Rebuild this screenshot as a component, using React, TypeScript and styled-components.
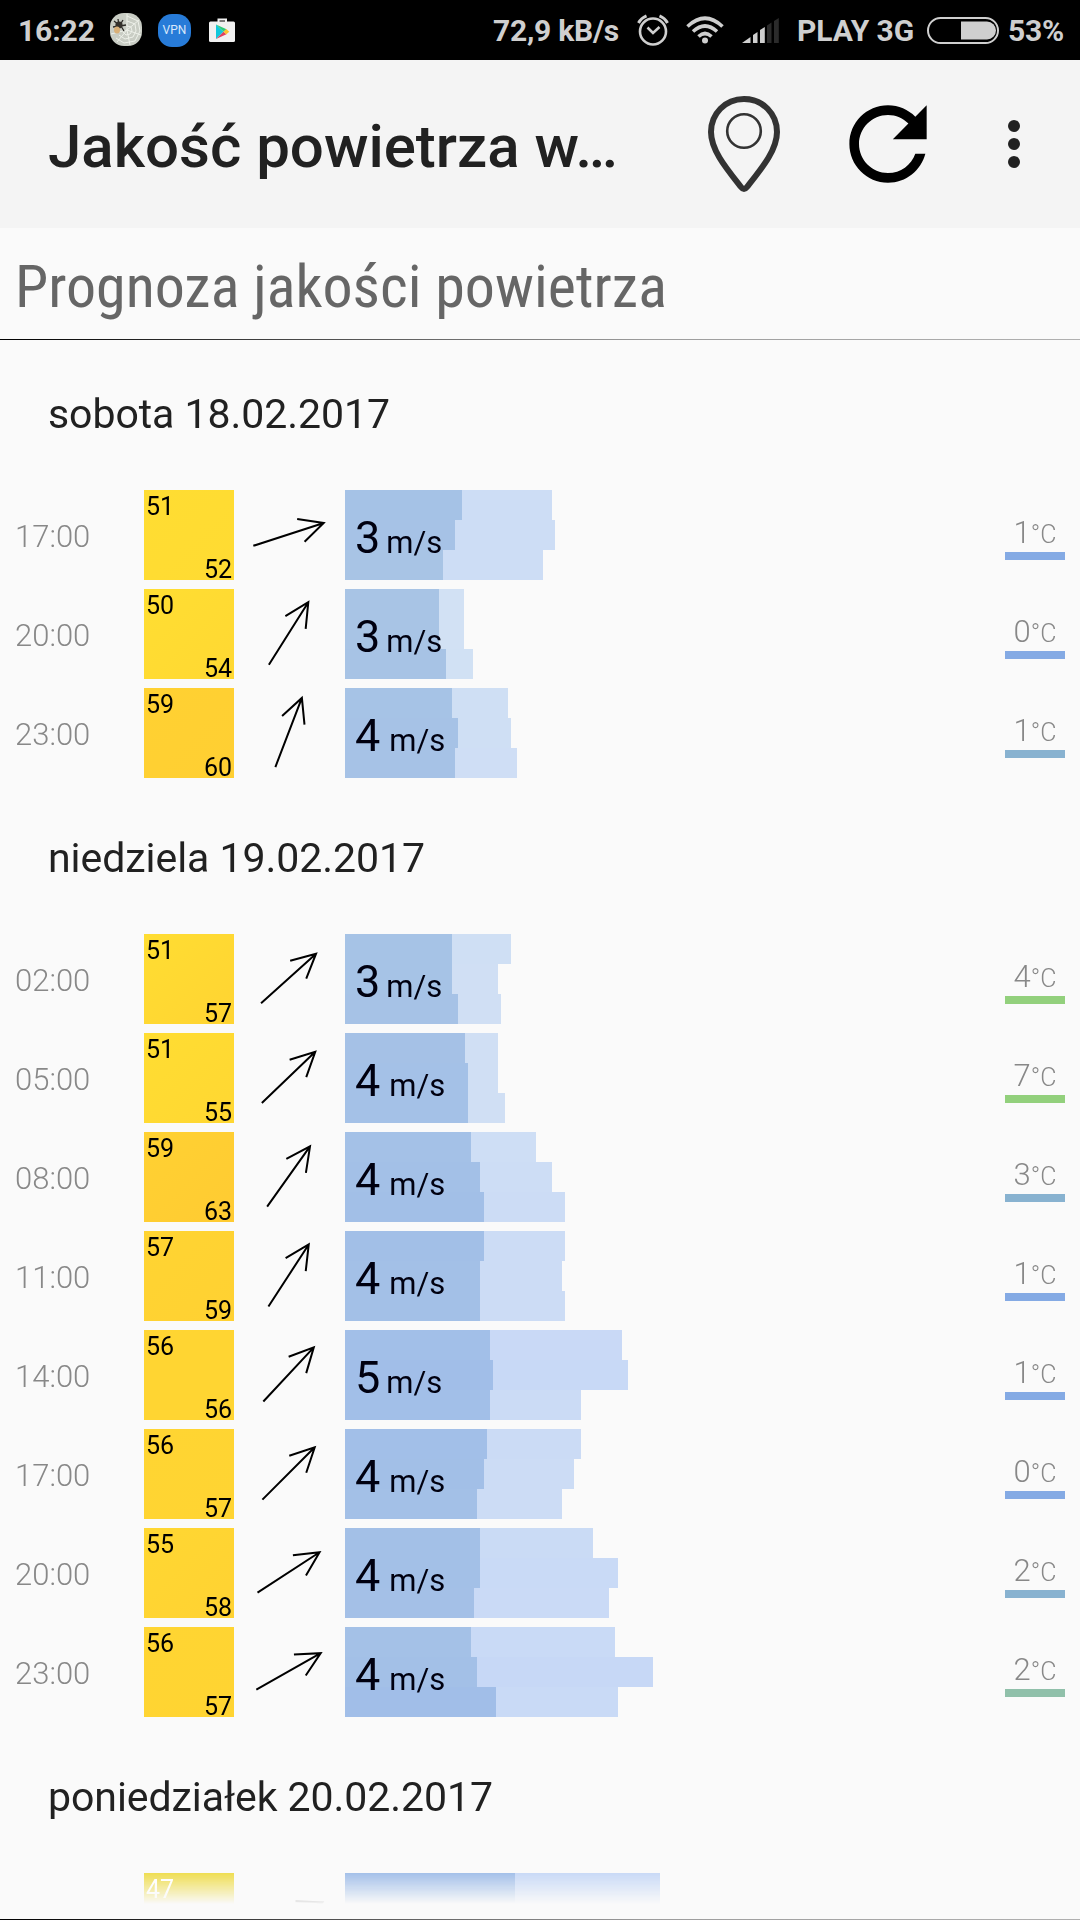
import React from "react";
import styled, { createGlobalStyle } from "styled-components";

const GlobalStyle = createGlobalStyle`
  * { box-sizing: border-box; }
  html, body { margin: 0; padding: 0; background: #fafafa; }
  body { font-family: Roboto, "Liberation Sans", sans-serif; }
`;

const Screen = styled.main`
  width: 1080px;
  height: 1920px;
  display: flex;
  flex-direction: column;
  overflow: hidden;
  background: #fafafa;
`;

const StatusBar = styled.header`
  flex: none;
  height: 60px;
  display: flex;
  align-items: center;
  justify-content: space-between;
  padding: 0 18px 0 18px;
  background: #000;
  color: #cfcfcf;
`;

const StatusGroup = styled.div`
  display: flex;
  align-items: center;
  svg { display: block; flex: none; }
`;

const StatusText = styled.span<{ $width: number; $gap: number; $tight?: boolean }>`
  flex: none;
  width: ${(p) => p.$width}px;
  margin-right: ${(p) => p.$gap}px;
  padding-top: 1px;
  font-size: 30px;
  font-weight: 700;
  letter-spacing: ${(p) => (p.$tight ? -0.25 : -0.1)}px;
  line-height: 59px;
  white-space: nowrap;
`;

const Slot = styled.span<{ $gap: number }>`
  flex: none;
  margin-right: ${(p) => p.$gap}px;
`;

const AppBar = styled.nav`
  flex: none;
  height: 168px;
  display: flex;
  align-items: center;
  padding: 0 60px 0 48px;
  background: #f4f4f4;
  svg { display: block; flex: none; }
`;

const AppTitle = styled.h1`
  flex: 1;
  margin: 5px 0 0;
  font-size: 60px;
  font-weight: 500;
  line-height: 80px;
  color: #212121;
  white-space: nowrap;
`;

const PageTitle = styled.h2`
  flex: none;
  height: 111px;
  margin: 0;
  padding: 4px 0 0 15px;
  font-family: "Roboto Condensed", Roboto, sans-serif;
  font-stretch: 75%;
  font-size: 60px;
  font-weight: 400;
  line-height: 110px;
  color: #666;
  white-space: nowrap;
`;

const Divider = styled.div`
  flex: none;
  height: 1px;
  background: linear-gradient(to right, #000, #9c9c9c 60%, #b0b0b0);
`;

const Forecast = styled.section`
  flex: none;
  height: 1579px;
  overflow: hidden;
  mask-image: linear-gradient(to bottom, #000 1532px, transparent 1564px);
`;

const DayTitle = styled.h3<{ $first?: boolean }>`
  margin: 0;
  height: ${(p) => (p.$first ? 150 : 156)}px;
  padding: ${(p) => (p.$first ? 50 : 56)}px 0 0 48px;
  font-size: 41px;
  font-weight: 400;
  line-height: 49px;
  letter-spacing: -0.05px;
  color: #212121;
  white-space: nowrap;
`;

const Rows = styled.div`
  display: flex;
  flex-direction: column;
  gap: 9px;
`;

const Row = styled.div`
  display: grid;
  grid-template-columns: 129px 90px 111px 1fr 60px;
  grid-template-rows: 90px;
  height: 90px;
  padding: 0 15px;
`;

const Time = styled.time`
  padding-top: 4px;
  font-size: 31px;
  font-weight: 300;
  line-height: 86px;
  color: #888;
`;

const Quality = styled.div<{ $from: string; $to: string }>`
  display: flex;
  flex-direction: column;
  justify-content: space-between;
  padding: 3px 2px 0 2px;
  background: linear-gradient(135deg, ${(p) => p.$from}, ${(p) => p.$to});
`;

const Index = styled.span<{ $end?: boolean; $light?: boolean }>`
  align-self: ${(p) => (p.$end ? "flex-end" : "flex-start")};
  font-size: 25px;
  line-height: ${(p) => (p.$end ? 21 : 27)}px;
  color: ${(p) => (p.$light ? "#fff" : "#000")};
`;

const WindChart = styled.div`
  display: grid;
  grid-template-rows: repeat(3, 30px);
  > * { grid-column: 1; }
`;

const Gust = styled.div<{ $row: number }>`
  grid-row: ${(p) => p.$row};
  display: flex;
`;

const Speed = styled.div`
  grid-row: 1 / 4;
  z-index: 1;
  display: flex;
  align-items: baseline;
  padding: 21px 0 0 10px;
  font-size: 45px;
  line-height: 53px;
  color: #000010;
`;

const Unit = styled.span<{ $wide?: boolean }>`
  margin-left: ${(p) => (p.$wide ? 9 : 6)}px;
  font-size: 31px;
`;

const Temperature = styled.div<{ $color: string }>`
  height: 70px;
  border-bottom: 8px solid ${(p) => p.$color};
  padding-top: 24px;
  font-size: 31px;
  font-weight: 300;
  line-height: 38px;
  color: #888;
  text-align: center;
  small { font-size: 25px; }
`;

type Reading = {
  time: string;
  from: number;
  to: number;
  angle: number;
  speed: number;
  wind: number[];
  gust: number[];
  temp: number;
  tint: string;
};

const BLUE = "#84aae4";
const TEAL = "#88b2d0";
const GREEN = "#92d07c";
const SEA = "#90c0aa";

const days: { title: string; rows: Reading[] }[] = [
  {
    title: "sobota 18.02.2017",
    rows: [
      { time: "17:00", from: 51, to: 52, angle: 18, speed: 3, wind: [117, 110, 98], gust: [207, 210, 198], temp: 1, tint: BLUE },
      { time: "20:00", from: 50, to: 54, angle: 57.8, speed: 3, wind: [94, 94, 101], gust: [119, 119, 128], temp: 0, tint: BLUE },
      { time: "23:00", from: 59, to: 60, angle: 69, speed: 4, wind: [107, 113, 110], gust: [163, 166, 172], temp: 1, tint: TEAL },
    ],
  },
  {
    title: "niedziela 19.02.2017",
    rows: [
      { time: "02:00", from: 51, to: 57, angle: 42, speed: 3, wind: [107, 107, 113], gust: [166, 153, 156], temp: 4, tint: GREEN },
      { time: "05:00", from: 51, to: 55, angle: 43.8, speed: 4, wind: [120, 123, 123], gust: [153, 153, 160], temp: 7, tint: GREEN },
      { time: "08:00", from: 59, to: 63, angle: 54.6, speed: 4, wind: [126, 135, 139], gust: [191, 207, 220], temp: 3, tint: TEAL },
      { time: "11:00", from: 57, to: 59, angle: 57, speed: 4, wind: [139, 135, 135], gust: [220, 217, 220], temp: 1, tint: BLUE },
      { time: "14:00", from: 56, to: 56, angle: 47, speed: 5, wind: [145, 148, 145], gust: [277, 283, 236], temp: 1, tint: BLUE },
      { time: "17:00", from: 56, to: 57, angle: 45, speed: 4, wind: [142, 139, 132], gust: [236, 229, 217], temp: 0, tint: BLUE },
      { time: "20:00", from: 55, to: 58, angle: 33, speed: 4, wind: [135, 135, 129], gust: [248, 273, 264], temp: 2, tint: TEAL },
      { time: "23:00", from: 56, to: 57, angle: 29.5, speed: 4, wind: [126, 132, 151], gust: [270, 308, 273], temp: 2, tint: SEA },
    ],
  },
  {
    title: "poniedziałek 20.02.2017",
    rows: [
      { time: "02:00", from: 47, to: 49, angle: 24, speed: 5, wind: [170, 170, 170], gust: [315, 315, 315], temp: 2, tint: BLUE },
    ],
  },
];

const clamp = (t: number) => Math.max(0, Math.min(1, t));

const mix = (a: number[], b: number[], t: number) =>
  `rgb(${a.map((v, i) => Math.round(v + (b[i] - v) * clamp(t))).join(",")})`;

const qualityColor = (v: number) =>
  v < 50 ? "#eedc4c" : mix([255, 222, 50], [255, 203, 50], (v - 50) / 13);
const windColor = (w: number) => mix([168, 196, 229], [161, 190, 232], (w - 94) / 56);
const gustColor = (g: number) => mix([210, 225, 244], [199, 216, 246], (g - 119) / 189);

function Arrow({ angle }: { angle: number }) {
  return (
    <svg width="111" height="90" viewBox="0 0 111 90" fill="none" stroke="#000" strokeWidth="2">
      <path transform={`rotate(${-angle} 54.7 44.3)`} d="M17.500 44.300H91.500M67.500 32.300L91.500 44.300L67.500 56.300" />
    </svg>
  );
}

function ForecastRow({ r }: { r: Reading }) {
  const hidden = r.from < 50;
  return (
    <Row>
      <Time>{hidden ? "" : r.time}</Time>
      <Quality $from={qualityColor(r.from)} $to={qualityColor(hidden ? r.from : r.to)}>
        <Index $light={hidden}>{r.from}</Index>
        {!hidden && <Index $end>{r.to}</Index>}
      </Quality>
      <Arrow angle={r.angle} />
      <WindChart>
        {r.wind.map((w, i) => (
          <Gust key={i} $row={i + 1}>
            <div style={{ width: w, background: windColor(w) }} />
            <div style={{ width: r.gust[i] - w, background: gustColor(r.gust[i]) }} />
          </Gust>
        ))}
        {!hidden && (
          <Speed>
            {r.speed}
            <Unit $wide={r.speed === 4}>m/s</Unit>
          </Speed>
        )}
      </WindChart>
      {!hidden && (
        <Temperature $color={r.tint}>
          {r.temp}
          <small>°C</small>
        </Temperature>
      )}
    </Row>
  );
}

const SpiderIcon = () => (
  <svg width="34" height="34" viewBox="0 0 34 34">
    <rect x="1" y="0" width="32" height="33" rx="14" fill="#c9cdc4" />
    <g fill="none" stroke="#eef1ea" strokeWidth="1">
      <path d="M18 3L29 8L31 18L26 28L15 30L7 25" />
      <path d="M18 8L26 11L27 18L24 24L16 26L10 22" />
      <path d="M18 13L22 14L23 18L21 21L17 22L14 19" />
      <path d="M18 17L18 1M18 17L30 7M18 17L32 22M18 17L21 32M18 17L8 29M18 17L2 21" />
    </g>
    <path d="M5 8l5 4M9 6l1 6M14 7l-3 5M17 12l-6 1M4 14l6-1M12 13l3 5" stroke="#2c2a26" strokeWidth="1.3" />
    <ellipse cx="10" cy="12" rx="3.6" ry="3.4" fill="#33302b" />
    <ellipse cx="8" cy="17" rx="3" ry="3.6" fill="#d9b078" />
  </svg>
);

const VpnBadge = styled.span`
  display: flex;
  align-items: center;
  justify-content: center;
  width: 33px;
  height: 33px;
  border-radius: 14px;
  background: #277bd8;
  color: #d8e8fa;
  font-size: 12px;
  line-height: 33px;
`;

const PlayIcon = () => (
  <svg width="26" height="25" viewBox="0 0 26 25">
    <path d="M9.5 5V1.5h7.500V5" fill="none" stroke="#f1f1f1" strokeWidth="2" />
    <rect y="3.500" width="26" height="20.500" rx="1.500" fill="#f1f1f1" />
    <path d="M7 6.500V21l7.500-7.200z" fill="#10c8dc" />
    <path d="M7 6.500l10.500 4.700-3 2.600z" fill="#2fca7c" />
    <path d="M7 21l10.500-4.700-3-2.600z" fill="#e0405f" />
    <path d="M17.300 11.100l3 2.700-3 2.500-2.800-2.500z" fill="#fcc12c" />
  </svg>
);

const AlarmIcon = () => (
  <svg width="32" height="32" viewBox="0 0 32 32" fill="none" stroke="#cfcfcf">
    <circle cx="16" cy="17.500" r="13" strokeWidth="2.600" />
    <path d="M1.500 9Q4 4 9.500 1.800M30.500 9Q28 4 22.500 1.800" strokeWidth="3" />
    <path d="M10.500 13.500L16 19L22.500 13" strokeWidth="2.600" />
  </svg>
);

const WifiIcon = () => (
  <svg width="38" height="28" viewBox="0 0 38 28" fill="none" stroke="#cfcfcf" strokeWidth="3.600">
    <path d="M1.500 10.500Q19-6 36.500 10.500M7 15.500Q19 4.500 31 15.500M12.500 20.500Q19 14.500 25.500 20.500" />
    <circle cx="19" cy="24.500" r="3" fill="#cfcfcf" stroke="none" />
  </svg>
);

const SignalIcon = () => (
  <svg width="37" height="25" viewBox="0 0 37 25">
    <g fill="#cfcfcf">
      <path d="M0 25L8.500 19V25z" />
      <path d="M11 25V17l4.500-3V25z" />
      <path d="M18 25V12l4.800-3V25z" />
    </g>
    <path d="M25 25V7.500l4.500-3V25zM32 25V3l4.800-3V25z" fill="#2b2b2b" />
  </svg>
);

const BatteryIcon = () => (
  <svg width="72" height="27" viewBox="0 0 72 27">
    <rect x="1" y="1" width="70" height="25" rx="12.500" fill="none" stroke="#cfcfcf" strokeWidth="2" />
    <path d="M34 4.500H60a9 9 0 0 1 0 18H34z" fill="#cfcfcf" />
  </svg>
);

const PinIcon = () => (
  <svg width="72" height="96" viewBox="0 0 72 96" fill="none" stroke="#333">
    <path
      d="M36 3C17 3 3 18 3 36C3 54 18 72 33 91Q36 95 39 91C54 72 69 54 69 36C69 18 55 3 36 3Z"
      strokeWidth="6"
    />
    <circle cx="36" cy="35" r="16.800" strokeWidth="2.600" />
  </svg>
);

const RefreshIcon = () => (
  <svg width="116" height="116" viewBox="0 0 24 24">
    <path d="M17.650 6.350C16.200 4.900 14.210 4 12 4c-4.420 0-7.990 3.580-7.990 8s3.570 8 7.990 8c3.730 0 6.840-2.550 7.730-6h-2.080c-.82 2.330-3.040 4-5.650 4-3.310 0-6-2.690-6-6s2.690-6 6-6c1.660 0 3.140.69 4.220 1.780L13 11h7V4l-2.350 2.350z" />
  </svg>
);

const MoreIcon = () => (
  <svg width="12" height="48" viewBox="0 0 12 48" fill="#212121">
    <circle cx="6" cy="6" r="6" />
    <circle cx="6" cy="24" r="6" />
    <circle cx="6" cy="42" r="6" />
  </svg>
);

export default function App() {
  return (
    <>
      <GlobalStyle />
      <Screen>
        <StatusBar>
          <StatusGroup>
            <StatusText $width={77} $gap={14}>16:22</StatusText>
            <Slot $gap={15}><SpiderIcon /></Slot>
            <Slot $gap={18}><VpnBadge>VPN</VpnBadge></Slot>
            <PlayIcon />
          </StatusGroup>
          <StatusGroup>
            <StatusText $width={127} $gap={17} $tight>72,9 kB/s</StatusText>
            <Slot $gap={17}><AlarmIcon /></Slot>
            <Slot $gap={18}><WifiIcon /></Slot>
            <Slot $gap={18}><SignalIcon /></Slot>
            <StatusText $width={115} $gap={15}>PLAY 3G</StatusText>
            <Slot $gap={9}><BatteryIcon /></Slot>
            <StatusText $width={54} $gap={0} $tight>53%</StatusText>
          </StatusGroup>
        </StatusBar>
        <AppBar>
          <AppTitle>Jakość powietrza w…</AppTitle>
          <Slot $gap={50}><PinIcon /></Slot>
          <Slot $gap={62}><RefreshIcon /></Slot>
          <MoreIcon />
        </AppBar>
        <PageTitle>Prognoza jakości powietrza</PageTitle>
        <Divider />
        <Forecast>
          {days.map((day, i) => (
            <React.Fragment key={day.title}>
              <DayTitle $first={i === 0}>{day.title}</DayTitle>
              <Rows>
                {day.rows.map((r) => (
                  <ForecastRow key={r.time} r={r} />
                ))}
              </Rows>
            </React.Fragment>
          ))}
        </Forecast>
        <Divider />
      </Screen>
    </>
  );
}
